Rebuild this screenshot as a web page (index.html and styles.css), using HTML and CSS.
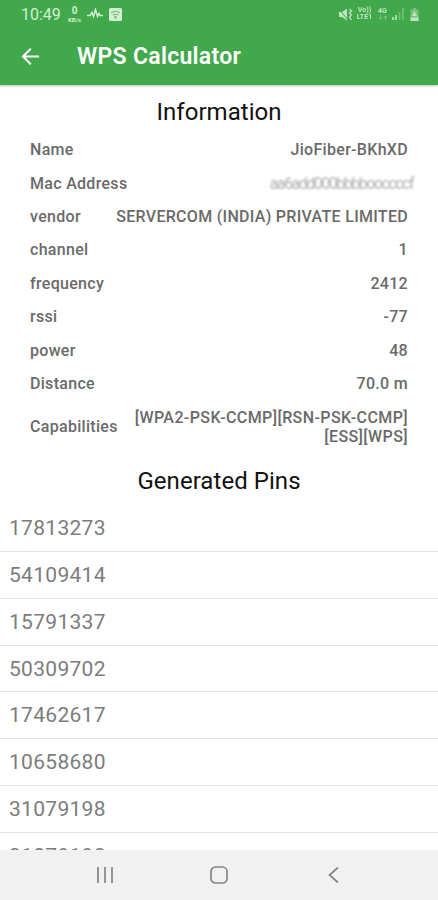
FILE: index.html
```html
<!DOCTYPE html>
<html lang="en">
<head>
    <meta charset="UTF-8">
    <meta name="viewport" content="width=device-width, initial-scale=1.0">
    <title>WPS Calculator</title>
    <link rel="stylesheet" href="styles.css">
</head>
<body>
    <div class="screen">
        <header class="header">
            <div class="status-bar">
                <div class="status-left">
                    <span class="time">10:49</span>
                    <span class="speed"><b>0</b><small>KB/s</small></span>
                    <svg class="pulse" width="16" height="12" viewBox="0 0 16 12">
                        <path d="M0 7.5h3l2-3 1.5 4 2-7 2 7 1.5-3 1 2H16" fill="none" stroke="currentColor" stroke-width="1.5"/>
                    </svg>
                    <svg width="13" height="13" viewBox="0 0 13 13">
                        <rect width="13" height="13" rx="1.5" fill="currentColor"/>
                        <path d="M2 5.2Q6.5 1.4 11 5.2M3.8 7.4Q6.5 5.2 9.2 7.4" fill="none" stroke="#6fbd74" stroke-width="1.1"/>
                        <circle cx="6.5" cy="9.3" r="1.3" fill="#6fbd74"/>
                    </svg>
                </div>
                <div class="status-right">
                    <svg width="15" height="13" viewBox="0 0 15 13">
                        <path d="M1 4h3l5-3.5v12L4 9H1z" fill="currentColor"/>
                        <path d="M1 1l9 11" stroke="#41a94b" stroke-width="1"/>
                        <path d="M11.5 1l2 2-2 2 2 2-2 2 2 3" fill="none" stroke="currentColor" stroke-width="1.3"/>
                    </svg>
                    <span class="volte"><b>Vo))</b><b>LTE1</b></span>
                    <span class="network"><b>4G</b><svg width="10" height="5" viewBox="0 0 10 5"><path d="M2.5 0v4M1 2.5l1.5 1.7L4 2.5M7.5 5V1M6 2.5L7.5.8 9 2.5" fill="none" stroke="currentColor" stroke-width=".8" opacity=".6"/></svg></span>
                    <svg class="signal" width="12" height="12" viewBox="0 0 12 12">
                        <path d="M1 9v3M4 7v5" stroke="currentColor" stroke-width="1.6"/>
                        <path d="M7.5 4v8M11 0v12" stroke="currentColor" stroke-width="1.6" opacity=".4"/>
                    </svg>
                    <svg width="9" height="13" viewBox="0 0 9 13">
                        <path d="M3 0h3v1.5h2.5V13H.5V1.5H3z" fill="currentColor" opacity=".45"/>
                        <path d="M.5 9.5h8V13h-8zM4.5 3L7 8H2z" fill="currentColor"/>
                    </svg>
                </div>
            </div>
            <div class="toolbar">
                <svg width="18" height="18" viewBox="0 0 18 18">
                    <path d="M18 8.5H2M9.8 .7L2 8.5l7.8 7.8" fill="none" stroke="#fff" stroke-width="2"/>
                </svg>
                <h1>WPS Calculator</h1>
            </div>
        </header>

        <main class="content">
            <h2 class="info-title">Information</h2>
            <dl class="info">
                <div class="row"><dt>Name</dt><dd>JioFiber-BKhXD</dd></div>
                <div class="row"><dt>Mac Address</dt><dd class="smudged">aa6add000bbbbooccccf</dd></div>
                <div class="row"><dt>vendor</dt><dd>SERVERCOM (INDIA) PRIVATE LIMITED</dd></div>
                <div class="row"><dt>channel</dt><dd>1</dd></div>
                <div class="row"><dt>frequency</dt><dd>2412</dd></div>
                <div class="row"><dt>rssi</dt><dd>-77</dd></div>
                <div class="row"><dt>power</dt><dd>48</dd></div>
                <div class="row"><dt>Distance</dt><dd>70.0 m</dd></div>
                <div class="row tall"><dt>Capabilities</dt><dd class="caps">[WPA2-PSK-CCMP][RSN-PSK-CCMP]<br>[ESS][WPS]</dd></div>
            </dl>

            <h2 class="pins-title">Generated Pins</h2>
            <ul class="pins">
                <li>17813273</li>
                <li>54109414</li>
                <li>15791337</li>
                <li>50309702</li>
                <li>17462617</li>
                <li>10658680</li>
                <li>31079198</li>
                <li>31079198</li>
            </ul>
        </main>

        <nav class="nav-bar">
            <svg width="18" height="18" viewBox="0 0 18 18">
                <path d="M2 1v16M9 1v16M16 1v16" stroke="currentColor" stroke-width="1.7"/>
            </svg>
            <svg width="18" height="18" viewBox="0 0 18 18">
                <rect x="1" y="1" width="16" height="16" rx="4.5" fill="none" stroke="currentColor" stroke-width="1.7"/>
            </svg>
            <svg width="18" height="18" viewBox="0 0 18 18">
                <path d="M14 1.5L5.5 9l8.5 7.5" fill="none" stroke="currentColor" stroke-width="1.7"/>
            </svg>
        </nav>
    </div>
</body>
</html>
```

FILE: styles.css
```css
* {
    box-sizing: border-box;
    margin: 0;
    padding: 0;
}
body {
    background: #fff;
    font-family: Roboto, sans-serif;
}
.screen {
    display: flex;
    flex-direction: column;
    height: 900px;
    overflow: hidden;
}
.header {
    flex: none;
    height: 85px;
    background: #41a94b;
    color: #fff;
    box-shadow: 0 1px 2px rgba(0, 0, 0, 0.25);
}
.status-bar {
    display: flex;
    justify-content: space-between;
    height: 28px;
    padding: 0 19px 0 21px;
    color: #d3efd3;
}
.status-left, .status-right {
    display: flex;
    align-items: center;
}
.time {
    width: 46px;
    font-size: 16px;
}
.speed {
    display: flex;
    flex-direction: column;
    align-items: center;
    width: 15px;
    margin-right: 5px;
}
.speed b {
    font-size: 10px;
    line-height: 10px;
}
.speed small {
    font-size: 6px;
    font-weight: 700;
    line-height: 7px;
}
.pulse {
    margin-right: 6px;
}
.status-right {
    opacity: 0.85;
}
.volte, .network {
    display: flex;
    flex-direction: column;
    align-items: center;
    font-size: 7px;
    line-height: 7px;
}
.volte {
    width: 17px;
    margin-left: 3px;
}
.network {
    width: 11px;
    margin-left: 4px;
}
.signal {
    margin: 0 6px 0 4px;
}
.toolbar {
    display: flex;
    align-items: center;
    height: 57px;
    padding-left: 21px;
}
.toolbar h1 {
    margin-left: 38px;
    font-size: 23px;
    font-weight: 600;
    letter-spacing: 0.3px;
}
.content {
    flex: 1;
    min-height: 0;
    overflow: hidden;
}
h2 {
    color: #111;
    font-size: 24px;
    font-weight: 400;
    line-height: 28px;
    letter-spacing: 0.05px;
    text-align: center;
}
.info-title {
    margin-top: 13px;
}
.info {
    margin-top: 7px;
    padding: 0 30px;
    color: #6a6a6a;
    font-size: 16px;
    font-weight: 500;
    line-height: 19px;
    letter-spacing: 0.3px;
}
.row {
    display: flex;
    align-items: center;
    justify-content: space-between;
    height: 33.4px;
}
.row dd {
    text-align: right;
    white-space: nowrap;
}
.row .smudged {
    margin-right: -5px;
    color: #b0b0b0;
    font-weight: 400;
    letter-spacing: -1.5px;
    filter: blur(1px);
}
.row .caps {
    letter-spacing: 0.4px;
}
.tall {
    height: 53px;
}
.pins-title {
    margin-top: 14px;
}
.pins {
    margin-top: 10px;
    list-style: none;
}
.pins li {
    height: 46.8px;
    padding-left: 9px;
    border-bottom: 1px solid #e2e2e2;
    color: #7c7c7c;
    font-size: 21px;
    line-height: 47px;
    letter-spacing: 0.3px;
}
.nav-bar {
    flex: none;
    display: flex;
    justify-content: space-between;
    align-items: center;
    height: 50px;
    padding: 0 96px;
    background: #f1f1f1;
    color: #858585;
}
```
